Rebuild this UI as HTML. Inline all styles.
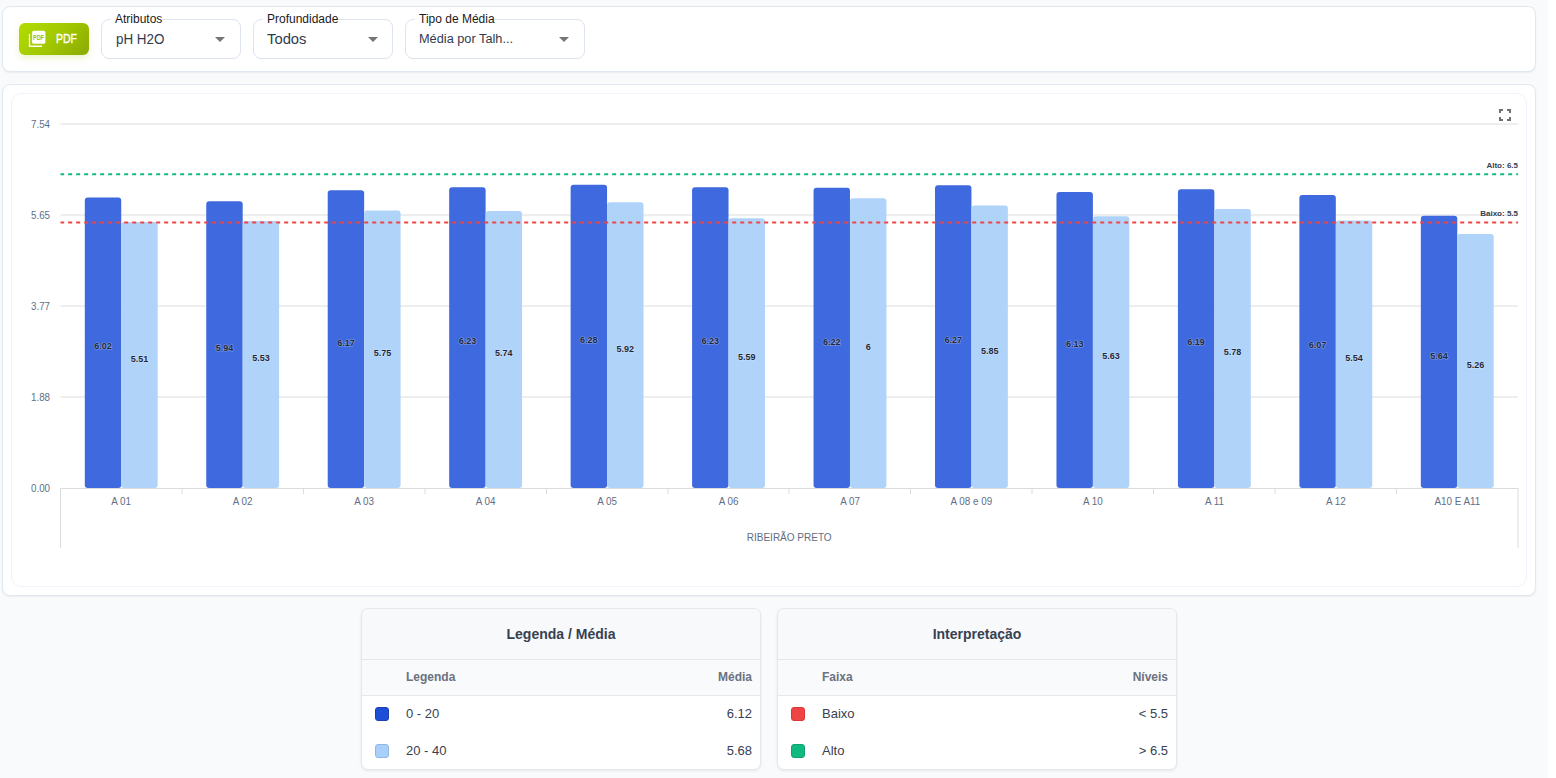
<!DOCTYPE html>
<html lang="pt">
<head>
<meta charset="utf-8">
<title>Gráfico</title>
<style>
*{box-sizing:border-box;margin:0;padding:0}
html,body{width:1556px;height:778px;overflow:hidden;background:#fff}
body{font-family:"Liberation Sans",sans-serif;position:relative}
.page{position:absolute;left:0;top:0;width:1548px;height:778px;background:#f8fafc}
.card{position:absolute;background:#fff;border:1px solid #e2e8f0;border-radius:8px;box-shadow:0 1px 2px rgba(15,23,42,.06)}
#c1{left:2px;top:6px;width:1534px;height:66px}
#c2{left:2px;top:84px;width:1534px;height:512px}
#c2in{position:absolute;left:11px;top:93px;width:1516px;height:494px;border:1px solid #eff3fb;border-radius:10px;background:#fff}
.btn{position:absolute;left:19px;top:23px;width:70px;height:32px;border-radius:6px;background:linear-gradient(135deg,#b3dc00 0%,#a2c800 50%,#8aa900 100%);box-shadow:0 3px 6px rgba(160,200,0,.22)}
.btn .t{position:absolute;left:37px;top:8px;color:#fff;font-size:12.5px;-webkit-text-stroke:0.35px #fff;line-height:16px;transform:scaleX(.84);transform-origin:0 0}
.sel{position:absolute;top:19px;height:40px;border:1px solid #dde4ee;border-radius:8px;background:#fff}
.sel .lab{position:absolute;top:-9px;left:9px;padding:0 0 0 4px;background:#fff;color:#1a1a1a;font-size:12px;line-height:16px;white-space:nowrap}
.sel .val{position:absolute;left:14px;top:9px;color:#2f3b4e;font-size:15.5px;line-height:20px;white-space:nowrap;transform-origin:0 0}
.sel .arr{position:absolute;top:17px;width:0;height:0;border-left:5px solid transparent;border-right:5px solid transparent;border-top:5px solid #757575}
svg.chart{position:absolute;left:0;top:0}
.yl{font-size:10.5px;fill:#5f6e86}
.xl{font-size:10.5px;fill:#5f6e86}
.bl{font-size:9px;font-weight:bold;fill:#1e293b;stroke:rgba(255,255,255,.35);stroke-width:1.2px;paint-order:stroke}
.ml{font-size:8px;font-weight:bold;fill:#374151}
.tcard{position:absolute;top:608px;width:400px;height:162px;background:#fff;border:1px solid #e5e7eb;border-radius:7px;overflow:hidden;box-shadow:0 1px 3px rgba(0,0,0,.08)}
.tcard .hd{position:absolute;left:0;top:0;width:100%;height:51px;background:#f8f9fb;border-bottom:1px solid #e5e7eb;text-align:center;font-weight:bold;font-size:14px;color:#374151;line-height:51px}
.tcard .ch{position:absolute;left:0;top:51px;width:100%;height:36px;background:#f9fafb;border-bottom:1px solid #e5e7eb;font-weight:bold;font-size:12px;color:#6b7280}
.tcard .ch span{position:absolute;top:9px;line-height:16px}
.tcard .row{position:absolute;left:0;width:100%;height:37px;font-size:13px;color:#374151}
.tcard .row span{position:absolute;top:10px;line-height:16px}
.tcard .sw{position:absolute;left:13px;top:11px;width:14px;height:14px;border-radius:3px}
</style>
</head>
<body>
<div class="page"></div>
<div class="card" id="c1"></div>
<div class="card" id="c2"></div>
<div id="c2in"></div>

<div class="btn">
  <svg width="70" height="32" style="position:absolute;left:0;top:0">
    <path d="M10.5 11v12.2h12.5" fill="none" stroke="#fff" stroke-width="1.35"/>
    <rect x="13.1" y="7.8" width="13.3" height="13" rx="1.6" fill="#fff"/>
    <text transform="translate(19.5 16.9) scale(.73 1)" text-anchor="middle" font-size="7.5" font-weight="bold" fill="#9cc000" font-family="Liberation Sans">PDF</text>
  </svg>
  <span class="t">PDF</span>
</div>

<div class="sel" style="left:101px;width:140px"><span class="lab">Atributos</span><span class="val" style="transform:scaleX(.865)">pH H2O</span><span class="arr" style="left:113px"></span></div>
<div class="sel" style="left:253px;width:140px"><span class="lab">Profundidade</span><span class="val" style="left:13px;transform:scaleX(.955)">Todos</span><span class="arr" style="left:114px"></span></div>
<div class="sel" style="left:405px;width:180px"><span class="lab">Tipo de Média</span><span class="val" style="font-size:12.5px;top:9px;left:13px;transform:scaleX(1.02)">Média por Talh...</span><span class="arr" style="left:153px"></span></div>

<svg class="chart" width="1556" height="778" style="font-family:'Liberation Sans',sans-serif">
<line x1="60.5" x2="1518.0" y1="124.00" y2="124.00" stroke="#dcdcdc" stroke-width="1"/>
<line x1="60.5" x2="1518.0" y1="215.00" y2="215.00" stroke="#dcdcdc" stroke-width="1"/>
<line x1="60.5" x2="1518.0" y1="306.00" y2="306.00" stroke="#dcdcdc" stroke-width="1"/>
<line x1="60.5" x2="1518.0" y1="397.00" y2="397.00" stroke="#dcdcdc" stroke-width="1"/>
<text transform="translate(50 127.8) scale(0.93 1)" text-anchor="end" class="yl">7.54</text>
<text transform="translate(50 218.8) scale(0.93 1)" text-anchor="end" class="yl">5.65</text>
<text transform="translate(50 309.8) scale(0.93 1)" text-anchor="end" class="yl">3.77</text>
<text transform="translate(50 400.8) scale(0.93 1)" text-anchor="end" class="yl">1.88</text>
<text transform="translate(50 491.8) scale(0.93 1)" text-anchor="end" class="yl">0.00</text>
<line x1="60.5" x2="1518.0" y1="488.5" y2="488.5" stroke="#dcdcdc" stroke-width="1"/>
<line x1="60.5" x2="60.5" y1="488" y2="548" stroke="#dcdcdc" stroke-width="1"/>
<line x1="182.0" x2="182.0" y1="488" y2="494" stroke="#dcdcdc" stroke-width="1"/>
<line x1="303.5" x2="303.5" y1="488" y2="494" stroke="#dcdcdc" stroke-width="1"/>
<line x1="425.0" x2="425.0" y1="488" y2="494" stroke="#dcdcdc" stroke-width="1"/>
<line x1="546.5" x2="546.5" y1="488" y2="494" stroke="#dcdcdc" stroke-width="1"/>
<line x1="668.0" x2="668.0" y1="488" y2="494" stroke="#dcdcdc" stroke-width="1"/>
<line x1="789.0" x2="789.0" y1="488" y2="494" stroke="#dcdcdc" stroke-width="1"/>
<line x1="910.5" x2="910.5" y1="488" y2="494" stroke="#dcdcdc" stroke-width="1"/>
<line x1="1032.0" x2="1032.0" y1="488" y2="494" stroke="#dcdcdc" stroke-width="1"/>
<line x1="1153.5" x2="1153.5" y1="488" y2="494" stroke="#dcdcdc" stroke-width="1"/>
<line x1="1275.0" x2="1275.0" y1="488" y2="494" stroke="#dcdcdc" stroke-width="1"/>
<line x1="1396.5" x2="1396.5" y1="488" y2="494" stroke="#dcdcdc" stroke-width="1"/>
<line x1="1518.0" x2="1518.0" y1="488" y2="548" stroke="#dcdcdc" stroke-width="1"/>
<rect x="84.79" y="197.38" width="36.44" height="290.62" rx="3" ry="3" fill="#3f69de"/>
<rect x="121.23" y="222.00" width="36.44" height="266.00" rx="3" ry="3" fill="#b0d3fa"/>
<rect x="206.25" y="201.24" width="36.44" height="286.76" rx="3" ry="3" fill="#3f69de"/>
<rect x="242.69" y="221.03" width="36.44" height="266.97" rx="3" ry="3" fill="#b0d3fa"/>
<rect x="327.71" y="190.14" width="36.44" height="297.86" rx="3" ry="3" fill="#3f69de"/>
<rect x="364.15" y="210.41" width="36.44" height="277.59" rx="3" ry="3" fill="#b0d3fa"/>
<rect x="449.17" y="187.24" width="36.44" height="300.76" rx="3" ry="3" fill="#3f69de"/>
<rect x="485.60" y="210.90" width="36.44" height="277.10" rx="3" ry="3" fill="#b0d3fa"/>
<rect x="570.62" y="184.83" width="36.44" height="303.17" rx="3" ry="3" fill="#3f69de"/>
<rect x="607.06" y="202.21" width="36.44" height="285.79" rx="3" ry="3" fill="#b0d3fa"/>
<rect x="692.08" y="187.24" width="36.44" height="300.76" rx="3" ry="3" fill="#3f69de"/>
<rect x="728.52" y="218.14" width="36.44" height="269.86" rx="3" ry="3" fill="#b0d3fa"/>
<rect x="813.54" y="187.72" width="36.44" height="300.28" rx="3" ry="3" fill="#3f69de"/>
<rect x="849.98" y="198.34" width="36.44" height="289.66" rx="3" ry="3" fill="#b0d3fa"/>
<rect x="935.00" y="185.31" width="36.44" height="302.69" rx="3" ry="3" fill="#3f69de"/>
<rect x="971.44" y="205.59" width="36.44" height="282.41" rx="3" ry="3" fill="#b0d3fa"/>
<rect x="1056.46" y="192.07" width="36.44" height="295.93" rx="3" ry="3" fill="#3f69de"/>
<rect x="1092.90" y="216.21" width="36.44" height="271.79" rx="3" ry="3" fill="#b0d3fa"/>
<rect x="1177.92" y="189.17" width="36.44" height="298.83" rx="3" ry="3" fill="#3f69de"/>
<rect x="1214.35" y="208.97" width="36.44" height="279.03" rx="3" ry="3" fill="#b0d3fa"/>
<rect x="1299.38" y="194.97" width="36.44" height="293.03" rx="3" ry="3" fill="#3f69de"/>
<rect x="1335.81" y="220.55" width="36.44" height="267.45" rx="3" ry="3" fill="#b0d3fa"/>
<rect x="1420.83" y="215.72" width="36.44" height="272.28" rx="3" ry="3" fill="#3f69de"/>
<rect x="1457.27" y="234.07" width="36.44" height="253.93" rx="3" ry="3" fill="#b0d3fa"/>
<line x1="60.5" x2="1518.0" y1="174.2" y2="174.2" stroke="#10b981" stroke-width="2" stroke-dasharray="4 4" stroke-dashoffset="0.3"/>
<line x1="60.5" x2="1518.0" y1="222.5" y2="222.5" stroke="#ef4444" stroke-width="2" stroke-dasharray="4 4" stroke-dashoffset="0.3"/>
<text x="1518.0" y="168" text-anchor="end" class="ml">Alto: 6.5</text>
<text x="1518.0" y="216" text-anchor="end" class="ml">Baixo: 5.5</text>
<text x="103.0" y="349.4" text-anchor="middle" class="bl">6.02</text>
<text x="139.4" y="361.7" text-anchor="middle" class="bl">5.51</text>
<text x="224.5" y="351.3" text-anchor="middle" class="bl">5.94</text>
<text x="260.9" y="361.2" text-anchor="middle" class="bl">5.53</text>
<text x="345.9" y="345.8" text-anchor="middle" class="bl">6.17</text>
<text x="382.4" y="355.9" text-anchor="middle" class="bl">5.75</text>
<text x="467.4" y="344.3" text-anchor="middle" class="bl">6.23</text>
<text x="503.8" y="356.1" text-anchor="middle" class="bl">5.74</text>
<text x="588.8" y="343.1" text-anchor="middle" class="bl">6.28</text>
<text x="625.3" y="351.8" text-anchor="middle" class="bl">5.92</text>
<text x="710.3" y="344.3" text-anchor="middle" class="bl">6.23</text>
<text x="746.7" y="359.8" text-anchor="middle" class="bl">5.59</text>
<text x="831.8" y="344.6" text-anchor="middle" class="bl">6.22</text>
<text x="868.2" y="349.9" text-anchor="middle" class="bl">6</text>
<text x="953.2" y="343.4" text-anchor="middle" class="bl">6.27</text>
<text x="989.7" y="353.5" text-anchor="middle" class="bl">5.85</text>
<text x="1074.7" y="346.7" text-anchor="middle" class="bl">6.13</text>
<text x="1111.1" y="358.8" text-anchor="middle" class="bl">5.63</text>
<text x="1196.1" y="345.3" text-anchor="middle" class="bl">6.19</text>
<text x="1232.6" y="355.2" text-anchor="middle" class="bl">5.78</text>
<text x="1317.6" y="348.2" text-anchor="middle" class="bl">6.07</text>
<text x="1354.0" y="361.0" text-anchor="middle" class="bl">5.54</text>
<text x="1439.1" y="358.6" text-anchor="middle" class="bl">5.64</text>
<text x="1475.5" y="367.7" text-anchor="middle" class="bl">5.26</text>
<text transform="translate(121.2 505) scale(0.94 1)" text-anchor="middle" class="xl">A 01</text>
<text transform="translate(242.7 505) scale(0.94 1)" text-anchor="middle" class="xl">A 02</text>
<text transform="translate(364.1 505) scale(0.94 1)" text-anchor="middle" class="xl">A 03</text>
<text transform="translate(485.6 505) scale(0.94 1)" text-anchor="middle" class="xl">A 04</text>
<text transform="translate(607.1 505) scale(0.94 1)" text-anchor="middle" class="xl">A 05</text>
<text transform="translate(728.5 505) scale(0.94 1)" text-anchor="middle" class="xl">A 06</text>
<text transform="translate(850.0 505) scale(0.94 1)" text-anchor="middle" class="xl">A 07</text>
<text transform="translate(971.4 505) scale(0.94 1)" text-anchor="middle" class="xl">A 08 e 09</text>
<text transform="translate(1092.9 505) scale(0.94 1)" text-anchor="middle" class="xl">A 10</text>
<text transform="translate(1214.4 505) scale(0.94 1)" text-anchor="middle" class="xl">A 11</text>
<text transform="translate(1335.8 505) scale(0.94 1)" text-anchor="middle" class="xl">A 12</text>
<text transform="translate(1457.3 505) scale(0.94 1)" text-anchor="middle" class="xl">A10 E A11</text>
<text transform="translate(789.2 541) scale(0.955 1)" text-anchor="middle" class="xl">RIBEIRÃO PRETO</text>
<g fill="#707070"><path d="M1499 109h4v2h-2v2h-2z M1511 109h-4v2h2v2h2z M1499 121h4v-2h-2v-2h-2z M1511 121h-4v-2h2v-2h2z"/></g>
</svg>

<div class="tcard" style="left:361px">
  <div class="hd">Legenda / Média</div>
  <div class="ch"><span style="left:44px">Legenda</span><span style="right:8px">Média</span></div>
  <div class="row" style="top:87px"><div class="sw" style="background:#1d4ed8;border:1px solid #1e40af"></div><span style="left:44px">0 - 20</span><span style="right:8px">6.12</span></div>
  <div class="row" style="top:124px"><div class="sw" style="background:#a8d0fb;border:1px solid #8fb8e6"></div><span style="left:44px">20 - 40</span><span style="right:8px">5.68</span></div>
</div>

<div class="tcard" style="left:777px">
  <div class="hd">Interpretação</div>
  <div class="ch"><span style="left:44px">Faixa</span><span style="right:8px">Níveis</span></div>
  <div class="row" style="top:87px"><div class="sw" style="background:#ef4444;border:1px solid #dc3535"></div><span style="left:44px">Baixo</span><span style="right:8px">&lt; 5.5</span></div>
  <div class="row" style="top:124px"><div class="sw" style="background:#10b981;border:1px solid #0ea371"></div><span style="left:44px">Alto</span><span style="right:8px">&gt; 6.5</span></div>
</div>
</body>
</html>
